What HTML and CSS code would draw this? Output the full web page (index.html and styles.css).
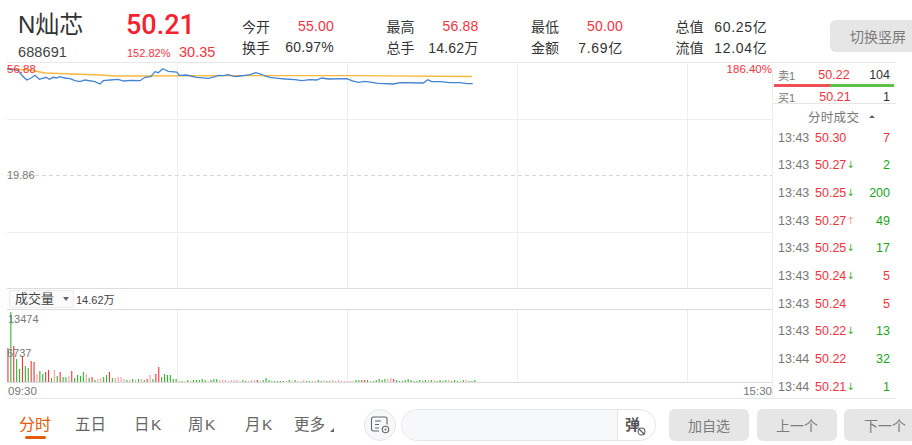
FILE: index.html
```html
<!DOCTYPE html>
<html lang="zh-CN">
<head>
<meta charset="utf-8">
<title>N灿芯</title>
<link rel="stylesheet" href="styles.css">
</head>
<body>
<div class="page">
  <header class="top">
    <div class="name-col">
      <div class="name">N灿芯</div>
      <div class="code">688691</div>
    </div>
    <div class="price-col">
      <div class="price">50.21</div>
      <div class="change"><span class="pct">152.82%</span><span class="diff">30.35</span></div>
    </div>
    <div class="stats">
      <div class="stat"><span>今开</span><b class="red">55.00</b><span>换手</span><b>60.97%</b></div>
      <div class="stat"><span>最高</span><b class="red">56.88</b><span>总手</span><b>14.62万</b></div>
      <div class="stat"><span>最低</span><b class="red">50.00</b><span>金额</span><b class="wide">7.69亿</b></div>
      <div class="stat"><span>总值</span><b class="wide">60.25亿</b><span>流值</span><b class="wide">12.04亿</b></div>
    </div>
    <button class="switch">切换竖屏</button>
  </header>

  <main class="body">
    <section class="charts">
      <div class="price-chart">
        <svg class="fill" viewBox="7 63 765 225" preserveAspectRatio="none">
          <path class="grid" d="M177.5 63V288M347.5 63V288M517.5 63V288M687.5 63V288M7 119.5H772M7 232.5H772"/>
          <path class="dash" d="M7 175.5H772"/>
          <polyline class="avg" points="7,69 30,70 45,73 100,75 115,76 240,75.7 350,75.7 472,76.5"/>
          <polyline class="line" points="7.3,69.3 13.3,69.3 18.3,70.7 21.7,75 26.7,80 30.7,78.3 35,75.3 39.3,79.3 42.7,78.3 46,77.3 49.3,79.3 53.3,77.3 56.7,78 59.3,76.7 65,78 70,78.7 75,80.7 80,81.7 85,80 95,81.7 100,84 103.3,80.7 110,80 118.3,79.3 123.3,81 131.7,80.3 140,80.7 145,77.3 150.7,76.7 155,71.7 158.3,72.7 162.7,68.7 168.3,71.3 176.7,72 179.3,75.3 186.7,75 196.7,77.3 208.3,78.3 215,76.7 218.3,75.3 223.3,75.7 228.3,74.7 235,76.7 240,76 245,75.3 250,74.7 255.7,72.7 260.7,74 265,76 270,77.3 278.3,78.3 285,79 295,79.7 301.7,80.7 310,79.7 316.7,80 321.7,78 328.3,79 346.7,78.7 351.7,80.7 358.3,82.3 365,81.3 378.3,83.3 393.3,84 400,82.7 423.3,83 427.7,79.7 431.7,81.7 440,81.7 450,82.7 460,82.7 466.7,83.7 472.7,83.7"/>
        </svg>
        <span class="lbl hi">56.88</span>
        <span class="lbl mid">19.86</span>
        <span class="lbl pctmax">186.40%</span>
      </div>
      <div class="vol-head">
        <div class="vol-select">成交量<i class="tri"></i></div>
        <span class="vol-total">14.62万</span>
      </div>
      <div class="vol-chart">
        <svg class="fill" id="vol" viewBox="7 310 765 72" preserveAspectRatio="none">
          <path class="grid" d="M177.5 310V382M347.5 310V382M517.5 310V382M687.5 310V382"/>
        </svg>
        <span class="lbl vmax">13474</span>
        <span class="lbl vmid">6737</span>
      </div>
      <div class="axis"><span>09:30</span><span>15:30</span></div>
    </section>

    <aside class="side">
      <div class="book ask"><span class="bl">卖1</span><span class="bp">50.22</span><span class="bv">104</span></div>
      <div class="ratio"><i class="ratio-r"></i><i class="ratio-g"></i></div>
      <div class="book bid"><span class="bl">买1</span><span class="bp">50.21</span><span class="bv">1</span></div>
      <div class="trade-head">分时成交<i class="tri-up"></i></div>
      <ul class="trades">
        <li><span class="t">13:43</span><span class="p">50.30</span><i></i><span class="v red">7</span></li>
        <li><span class="t">13:43</span><span class="p">50.27</span><i class="dn">↓</i><span class="v green">2</span></li>
        <li><span class="t">13:43</span><span class="p">50.25</span><i class="dn">↓</i><span class="v green">200</span></li>
        <li><span class="t">13:43</span><span class="p">50.27</span><i class="up">↑</i><span class="v green">49</span></li>
        <li><span class="t">13:43</span><span class="p">50.25</span><i class="dn">↓</i><span class="v green">17</span></li>
        <li><span class="t">13:43</span><span class="p">50.24</span><i class="dn">↓</i><span class="v red">5</span></li>
        <li><span class="t">13:43</span><span class="p">50.24</span><i></i><span class="v red">5</span></li>
        <li><span class="t">13:43</span><span class="p">50.22</span><i class="dn">↓</i><span class="v green">13</span></li>
        <li><span class="t">13:44</span><span class="p">50.22</span><i></i><span class="v green">32</span></li>
        <li><span class="t">13:44</span><span class="p">50.21</span><i class="dn">↓</i><span class="v green">1</span></li>
      </ul>
    </aside>
  </main>

  <footer class="bottom">
    <nav class="tabs">
      <a class="tab active">分时</a>
      <a class="tab w5">五日</a>
      <a class="tab wd">日K</a>
      <a class="tab wz">周K</a>
      <a class="tab wy">月K</a>
      <a class="tab more">更多<i class="corner"></i></a>
    </nav>
    <div class="round-icon">
      <svg width="20" height="18" viewBox="0 0 20 18"><path class="ic" d="M9 15H3.500A1.800 1.800 0 0 1 1.500 13V3A1.800 1.800 0 0 1 3.500 1H15A1.800 1.800 0 0 1 17 3V8.500"/><path class="ic" d="M5 5H11M5 8.500H9M5 12H9"/><circle class="ic" cx="15.500" cy="13.500" r="3.200"/><circle cx="15.500" cy="13.500" r="1" fill="#666"/></svg>
    </div>
    <div class="comment">
      <div class="comment-input"></div>
      <div class="danmu">弹<svg class="nope" width="9" height="9" viewBox="0 0 9 9"><circle class="ic2" cx="4.500" cy="4.500" r="3.500"/><path class="ic2" d="M2 2L7 7"/></svg></div>
    </div>
    <button class="act a1">加自选</button>
    <button class="act a2">上一个</button>
    <button class="act a3">下一个</button>
  </footer>
</div>
<script src="chart.js"></script>
</body>
</html>
```

FILE: styles.css
```css
* { box-sizing: border-box; }
html, body { margin: 0; padding: 0; background: #fff; overflow: hidden; }
body { font-family: "Liberation Sans", "Noto Sans CJK SC", sans-serif; color: #333; }
.page { width: 912px; height: 445px; overflow: hidden; display: flex; flex-direction: column; }

.top { height: 62px; flex-shrink: 0; display: flex; align-items: flex-start; padding-left: 18px; position: relative; }
.name-col { width: 108px; padding-top: 11px; }
.name { font-size: 24px; line-height: 28px; color: #333; }
.code { font-size: 14.500px; line-height: 18px; margin-top: 4px; letter-spacing: .1px; color: #444; }
.price-col { width: 116px; padding-top: 9px; }
.price { font-family: Roboto, "Liberation Sans", sans-serif; font-size: 27px; font-weight: 500; line-height: 32px; color: #f5222d; }
.change { display: flex; align-items: baseline; margin-top: 3px; padding-left: 1px; color: #f5333f; }
.pct { font-size: 11px; width: 52px; }
.diff { font-size: 14.500px; }
.stats { display: flex; padding-top: 15px; }
.stat { width: 92px; margin-right: 52.500px; display: grid; grid-template-columns: auto 1fr; grid-auto-rows: 21.500px; align-items: center; font-size: 14px; color: #333; }
.stat b { font-weight: 400; text-align: right; letter-spacing: .2px; }
.stat b.wide { letter-spacing: .7px; }
.red { color: #f5333f !important; }
.green { color: #1aa51a !important; }
.switch { position: absolute; left: 830px; top: 20px; width: 100px; height: 32px; border: 0; border-radius: 6px; background: #e6e6e6; color: #7c7c7c; font: 14px "Liberation Sans", "Noto Sans CJK SC", sans-serif; text-align: left; padding: 0 0 0 20px; }

.body { height: 337px; width: 889px; flex-shrink: 0; margin-left: 7px; display: flex; border-top: 1px solid #e8e8e8; border-bottom: 1px solid #e8e8e8; }
.charts { width: 765px; flex-shrink: 0; display: flex; flex-direction: column; }
.price-chart { height: 226px; flex-shrink: 0; position: relative; border-bottom: 1px solid #dcdcdc; }
.fill { width: 100%; height: 100%; display: block; }
.grid { fill: none; stroke: #eeeeee; stroke-width: 1; }
.dash { fill: none; stroke: #d8d8d8; stroke-width: 1; stroke-dasharray: 4 3; }
.avg { fill: none; stroke: #f6b93b; stroke-width: 1.300; }
.line { fill: none; stroke: #4483d2; stroke-width: 1.300; }
.lbl { position: absolute; font-size: 11px; line-height: 12px; color: #777; }
.hi { left: 0; top: 0; color: #f5333f; font-size: 11.500px; }
.mid { left: 0; top: 106px; }
.pctmax { right: 0; top: 0; color: #f5333f; font-size: 11.500px; }
.vol-head { height: 21px; flex-shrink: 0; display: flex; align-items: center; border-bottom: 1px solid #dcdcdc; padding-left: 2px; }
.vol-select { width: 65px; height: 18px; border: 1px solid #ececec; background: #fbfbfb; border-radius: 2px; font-size: 13px; line-height: 16px; padding-left: 5px; position: relative; color: #444; }
.tri { position: absolute; right: 4px; top: 6px; border: 3px solid transparent; border-top: 4px solid #666; border-bottom: 0; }
.vol-total { font-size: 11px; margin-left: 2px; color: #444; }
.vol-chart { height: 73px; flex-shrink: 0; position: relative; border-bottom: 1px solid #dcdcdc; }
.vmax { left: 1px; top: 3px; }
.vmid { left: 0; top: 37px; }
.axis { height: 15px; flex-shrink: 0; display: flex; justify-content: space-between; align-items: center; font-size: 11.500px; color: #777; padding-left: 1px; }

.side { width: 124px; flex-shrink: 0; border-left: 1px solid #eeeeee; display: flex; flex-direction: column; }
.book { display: grid; grid-template-columns: 36px 40px 1fr; align-items: center; padding: 0 6px 0 5px; flex-shrink: 0; }
.ask { height: 21px; padding-top: 2px; }
.bid { height: 16px; padding-top: 2px; }
.bl { font-size: 11px; color: #777; }
.bp { font-size: 12.500px; color: #f5333f; text-align: center; }
.bid .bp { padding-left: 2px; }
.bv { font-size: 12.500px; text-align: right; color: #333; }
.ratio { height: 3px; display: flex; margin: 0 2px 0 1px; flex-shrink: 0; }
.ratio-r { width: 56px; background: #ef4f55; }
.ratio-g { flex: 1; background: #5cc04a; }
.trade-head { height: 20px; border-top: 1px solid #e6e6e6; font-size: 12.500px; color: #777; display: flex; align-items: center; padding: 5px 0 0 35px; position: relative; letter-spacing: .3px; flex-shrink: 0; }
.tri-up { position: absolute; left: 96px; top: 11px; border: 3px solid transparent; border-bottom: 3px solid #666; border-top: 0; }
.trades { list-style: none; margin: 0; padding: 1px 6px 0 5px; height: 275px; flex-shrink: 0; }
.trades li { height: 27.650px; display: flex; align-items: center; font-size: 12.500px; }
.t { width: 37px; color: #777; }
.p { color: #f5333f; }
.trades li i { width: 10px; font-family: "DejaVu Sans", sans-serif; font-style: normal; font-size: 10px; line-height: 10px; text-align: left; }
.dn { color: #35b035; }
.up { color: #f79a9a; }
.v { margin-left: auto; }

.bottom { height: 46px; flex-shrink: 0; position: relative; display: flex; align-items: flex-start; padding-top: 10px; }
.tabs { display: flex; width: 364px; flex-shrink: 0; padding-left: 19px; height: 32px; font-size: 15.500px; color: #666; }
.tab { line-height: 32px; position: relative; width: 56px; flex-shrink: 0; }
.tab.active { color: #e8590c; font-size: 16px; }
.tab.active::after { content: ""; position: absolute; left: 6px; bottom: 2px; width: 21px; height: 3px; border-radius: 2px; background: #e8590c; }
.w5 { width: 59px; }
.wd { width: 54px; letter-spacing: 1.500px; }
.wz { width: 57px; letter-spacing: 1.500px; }
.wy { width: 49px; letter-spacing: 1.500px; }
.more { width: 40px; }
.corner { position: absolute; left: 36px; top: 19px; width: 0; height: 0; border-left: 4px solid transparent; border-bottom: 4px solid #666; }
.round-icon { width: 32px; height: 32px; flex-shrink: 0; border: 1px solid #e4e6ea; border-radius: 50%; background: #f7f8fa; display: flex; align-items: center; justify-content: center; margin-right: 5px; }
.ic { fill: none; stroke: #666; stroke-width: 1.100; }
.ic2 { fill: none; stroke: #555; stroke-width: 1.100; }
.comment { width: 255px; height: 32px; flex-shrink: 0; border: 1px solid #e4e6ea; border-radius: 16px; display: flex; overflow: hidden; margin-right: 13px; }
.comment-input { flex: 1; background: #f7f8fa; }
.danmu { width: 38px; border-left: 1px solid #e4e6ea; font-size: 15px; font-weight: 700; color: #555; line-height: 30px; padding-left: 7px; position: relative; }
.nope { position: absolute; left: 19px; top: 17px; background: #fff; border-radius: 50%; }
.act { width: 80px; height: 32px; flex-shrink: 0; border: 0; border-radius: 6px; background: #e6e6e6; color: #7c7c7c; font: 14px "Liberation Sans", "Noto Sans CJK SC", sans-serif; padding: 0; }
.a1 { margin-right: 8px; }
.a2 { margin-right: 7px; }
.a3 { width: 82px; }
```

FILE: chart.js
```js
var bars = "34r 70g 36r 23g 13g 26r 16g 14g 21r 20r 8p 11g 8g 10r 12r 4g 12p 6g 10r 5g 5g 6p 11r 4g 7g 6g 10g 8p 4g 5r 2g 3p 4p 5g 7g 10r 4g 4p 5p 5p 3p 2g 2p 3g 2p 3g 3p 2g 3r 7p 3g 8r 15r 5g 8g 7g 7g 3g 3g 1p 1g 1p 2g 1p 2g 2g 2g 3g 2g 1p 2g 3g 3g 2p 2p 2p 1p 2p 2p 2p 1p 2g 1g 1p 2p 2p 2r 1p 2g 4g 2g 1g 1g 1g 1g 1g 1p 2g 1p 2g 1p 1p 2p 1g 1g 1p 1p 2g 1g 2p 1g 1g 2p 1p 2p 1p 1p 1p 1p 1p 2g 2g 2r 2r 2g 1p 1g 2g 3g 2g 3g 3p 4p 3r 2g 1g 1g 2g 3g 2g 1g 1g 2g 1g 2g 2p 2g 2p 1g 2g 1g 2g 2p 1g 2g 1g 1p 2g 2p 1g 1g 2g".split(" ");
var colors = { r: "#f5333f", p: "#f79a9f", g: "#2fb52f" };
var svg = document.getElementById("vol");
bars.forEach(function (b, i) {
  var h = parseInt(b, 10);
  var rect = document.createElementNS("http://www.w3.org/2000/svg", "rect");
  rect.setAttribute("x", (7.4 + i * 2.9).toFixed(1));
  rect.setAttribute("y", 382 - h);
  rect.setAttribute("width", 1.1);
  rect.setAttribute("height", h);
  rect.setAttribute("fill", colors[b.charAt(b.length - 1)]);
  svg.appendChild(rect);
});
```
